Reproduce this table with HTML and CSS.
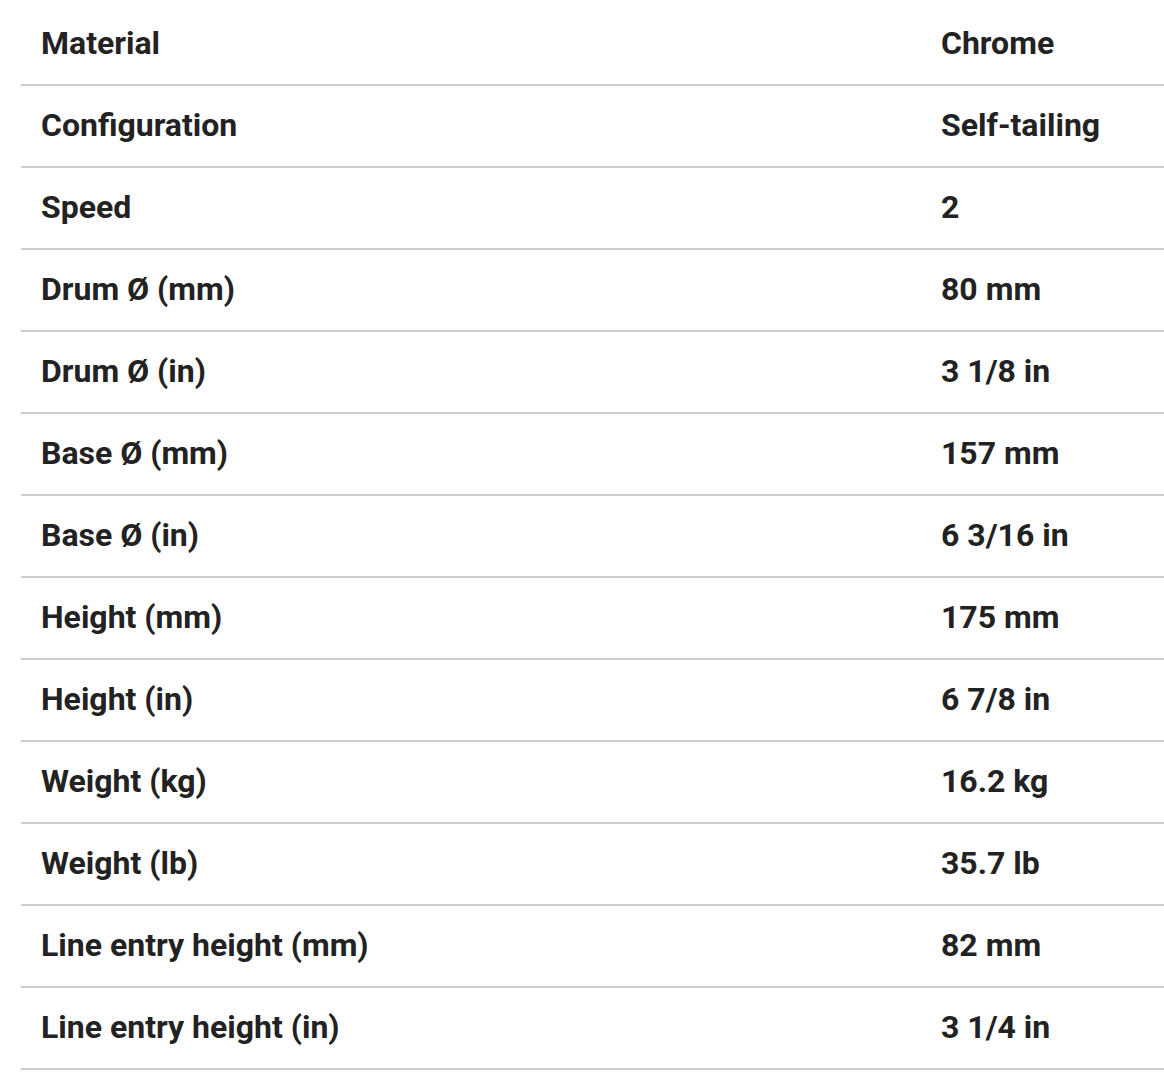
FILE: index.html
```html
<!DOCTYPE html>
<html>
<head>
<meta charset="utf-8">
<link rel="stylesheet" href="styles.css">
</head>
<body>
<div class="wrap">
<table class="specs">
<tbody>
<tr><td class="k">Material</td><td class="v">Chrome</td></tr>
<tr><td class="k">Configuration</td><td class="v">Self-tailing</td></tr>
<tr><td class="k">Speed</td><td class="v">2</td></tr>
<tr><td class="k">Drum Ø (mm)</td><td class="v">80 mm</td></tr>
<tr><td class="k">Drum Ø (in)</td><td class="v">3 1/8 in</td></tr>
<tr><td class="k">Base Ø (mm)</td><td class="v">157 mm</td></tr>
<tr><td class="k">Base Ø (in)</td><td class="v">6 3/16 in</td></tr>
<tr><td class="k">Height (mm)</td><td class="v">175 mm</td></tr>
<tr><td class="k">Height (in)</td><td class="v">6 7/8 in</td></tr>
<tr><td class="k">Weight (kg)</td><td class="v">16.2 kg</td></tr>
<tr><td class="k">Weight (lb)</td><td class="v">35.7 lb</td></tr>
<tr><td class="k">Line entry height (mm)</td><td class="v">82 mm</td></tr>
<tr><td class="k">Line entry height (in)</td><td class="v">3 1/4 in</td></tr>
</tbody>
</table>
</div>
</body>
</html>
```
FILE: styles.css
```css
html, body {
  margin: 0;
  padding: 0;
  background: #fff;
}
.wrap {
  padding: 3px 0 0 21px;
}
.specs {
  width: 1143px;
  border-collapse: collapse;
  font-family: Roboto, "Liberation Sans", sans-serif;
  font-weight: 700;
  font-size: 32px;
  color: #222;
}
.specs td {
  height: 82px;
  padding: 0 0 2px 20px;
  border-bottom: 2px solid #cdcdcd;
  vertical-align: middle;
  box-sizing: border-box;
}
.specs td.k {
  width: 900px;
}
```
